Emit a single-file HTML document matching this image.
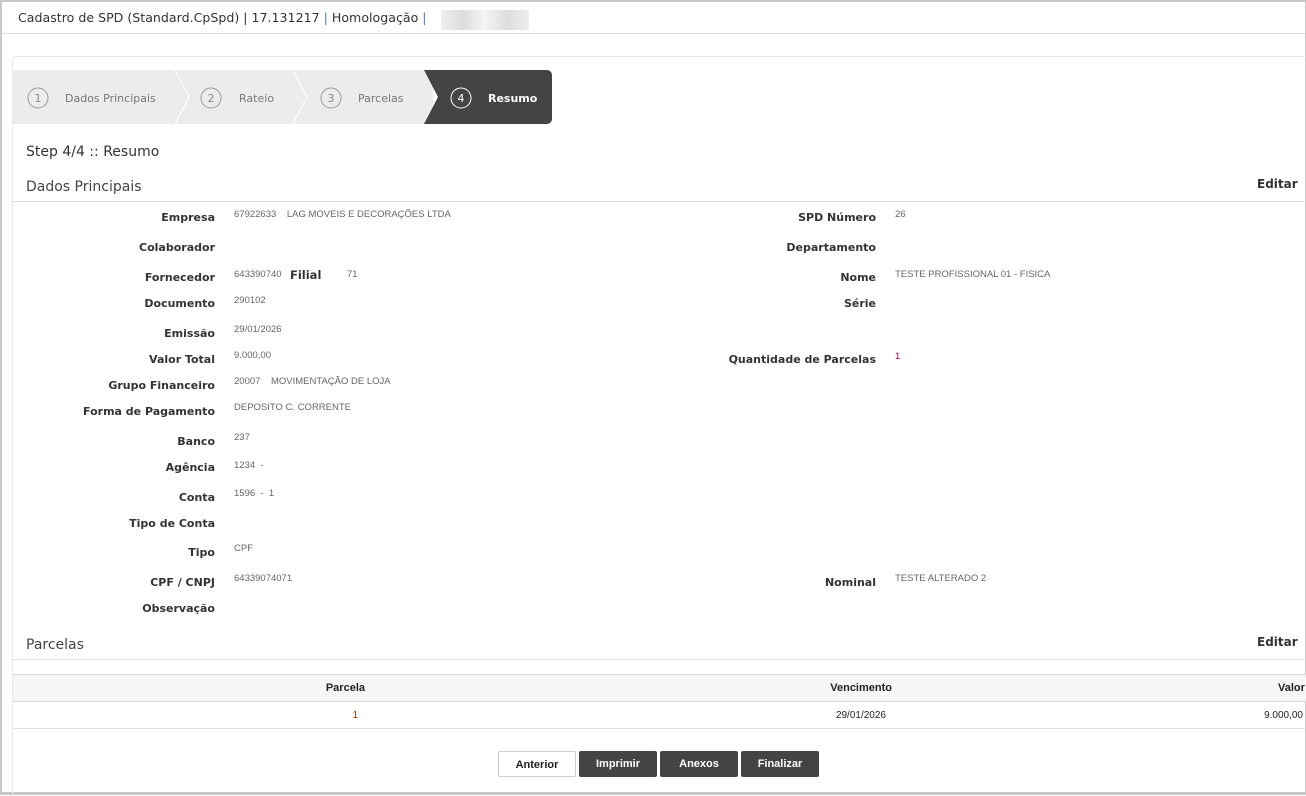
<!DOCTYPE html>
<html><head><meta charset="utf-8"><style>
*{margin:0;padding:0;box-sizing:border-box}
body{width:1306px;height:795px;background:#fff;position:relative;overflow:hidden;font-family:"DejaVu Sans","Liberation Sans",sans-serif}
.outer{position:absolute;left:0;top:0;width:1306px;height:795px;border:2px solid #c8c8c8;border-right:1px solid #c8c8c8;border-bottom:3px solid #c8c8c8}
.a{position:absolute;white-space:nowrap}
.lbl{position:absolute;font-weight:bold;font-size:11px;color:#333;text-align:right;white-space:nowrap}
.val{position:absolute;font-family:"Liberation Sans",sans-serif;font-size:9.5px;color:#666;white-space:nowrap}
.btn{position:absolute;top:751px;height:26px;border-radius:2px;font-family:"Liberation Sans",sans-serif;font-weight:bold;font-size:11px;text-align:center;line-height:26px;background:#444;color:#fff}
</style></head><body>
<div class="outer"></div>
<div class="a" style="left:18px;top:10px;font-size:12.6px;color:#333">Cadastro de SPD (Standard.CpSpd) | 17.131217 <span style="color:#4a7ab5">|</span> Homologação <span style="color:#4a7ab5">|</span></div>
<div class="a" style="left:441px;top:10px;width:88px;height:20px;background:linear-gradient(90deg,#eee,#ddd,#f4f4f4,#ddd,#eee)"></div>
<div class="a" style="left:2px;top:33px;width:1303px;height:1px;background:#ddd"></div>
<div class="a" style="left:12px;top:56px;width:1294px;height:740px;border:1px solid #e8e8e8;border-right:none;border-bottom:none;border-radius:4px 0 0 0"></div>
<!-- steps -->
<div class="a" style="left:13px;top:70px;width:420px;height:54px;background:#ececec"></div>
<svg class="a" style="left:13px;top:70px" width="540" height="54">
<polyline points="162,0 176,27 162,54" fill="none" stroke="#fff" stroke-width="1.2"/>
<polyline points="280,0 294,27 280,54" fill="none" stroke="#fff" stroke-width="1.2"/>
<path d="M411,0 H534 a5,5 0 0 1 5,5 V49 a5,5 0 0 1 -5,5 H411 L425,27 Z" fill="#444"/>
<circle cx="25" cy="28" r="10" fill="none" stroke="#999"/>
<circle cx="198" cy="28" r="10" fill="none" stroke="#999"/>
<circle cx="318" cy="28" r="10" fill="none" stroke="#999"/>
<circle cx="448" cy="28" r="10" fill="none" stroke="#fff"/>
<text x="25" y="32" font-size="11" fill="#888" text-anchor="middle" font-family="DejaVu Sans">1</text>
<text x="198" y="32" font-size="11" fill="#888" text-anchor="middle" font-family="DejaVu Sans">2</text>
<text x="318" y="32" font-size="11" fill="#888" text-anchor="middle" font-family="DejaVu Sans">3</text>
<text x="448" y="32" font-size="11" fill="#fff" text-anchor="middle" font-family="DejaVu Sans">4</text>
<text x="52" y="32" font-size="11" fill="#777" font-family="DejaVu Sans">Dados Principais</text>
<text x="226" y="32" font-size="11" fill="#777" font-family="DejaVu Sans">Rateio</text>
<text x="345" y="32" font-size="11" fill="#777" font-family="DejaVu Sans">Parcelas</text>
<text x="475" y="32" font-size="11" fill="#fff" font-weight="bold" font-family="DejaVu Sans">Resumo</text>
</svg>
<div class="a" style="left:26px;top:144px;font-size:14px;color:#333">Step 4/4 :: Resumo</div>
<div class="a" style="left:26px;top:179px;font-size:14px;color:#444">Dados Principais</div>
<div class="a" style="left:1257px;top:177px;font-size:12px;font-weight:bold;color:#333">Editar</div>
<div class="a" style="left:13px;top:201px;width:1293px;height:1px;background:#ddd"></div>

<div class="lbl" style="right:1091px;top:211px">Empresa</div><div class="val" style="left:234px;top:209px">67922633 &nbsp;&nbsp; LAG MOVEIS E DECORAÇÕES LTDA</div>
<div class="lbl" style="right:1091px;top:241px">Colaborador</div>
<div class="lbl" style="right:1091px;top:271px">Fornecedor</div><div class="val" style="left:234px;top:269px">643390740</div><div class="a" style="left:290px;top:268px;font-size:11.5px;font-weight:bold;color:#333">Filial</div><div class="val" style="left:347px;top:269px">71</div>
<div class="lbl" style="right:1091px;top:297px">Documento</div><div class="val" style="left:234px;top:295px">290102</div>
<div class="lbl" style="right:1091px;top:327px">Emissão</div><div class="val" style="left:234px;top:324px">29/01/2026</div>
<div class="lbl" style="right:1091px;top:353px">Valor Total</div><div class="val" style="left:234px;top:350px">9.000,00</div>
<div class="lbl" style="right:1091px;top:379px">Grupo Financeiro</div><div class="val" style="left:234px;top:376px">20007 &nbsp;&nbsp; MOVIMENTAÇÃO DE LOJA</div>
<div class="lbl" style="right:1091px;top:405px">Forma de Pagamento</div><div class="val" style="left:234px;top:402px">DEPOSITO C. CORRENTE</div>
<div class="lbl" style="right:1091px;top:435px">Banco</div><div class="val" style="left:234px;top:432px">237</div>
<div class="lbl" style="right:1091px;top:461px">Agência</div><div class="val" style="left:234px;top:460px">1234 &nbsp;-</div>
<div class="lbl" style="right:1091px;top:491px">Conta</div><div class="val" style="left:234px;top:488px">1596 &nbsp;- &nbsp;1</div>
<div class="lbl" style="right:1091px;top:517px">Tipo de Conta</div>
<div class="lbl" style="right:1091px;top:546px">Tipo</div><div class="val" style="left:234px;top:543px">CPF</div>
<div class="lbl" style="right:1091px;top:576px">CPF / CNPJ</div><div class="val" style="left:234px;top:573px">64339074071</div>
<div class="lbl" style="right:1091px;top:602px">Observação</div>

<div class="lbl" style="right:430px;top:211px">SPD Número</div><div class="val" style="left:895px;top:209px">26</div>
<div class="lbl" style="right:430px;top:241px">Departamento</div>
<div class="lbl" style="right:430px;top:271px">Nome</div><div class="val" style="left:895px;top:269px">TESTE PROFISSIONAL 01 - FISICA</div>
<div class="lbl" style="right:430px;top:297px">Série</div>
<div class="lbl" style="right:430px;top:353px">Quantidade de Parcelas</div><div class="val" style="left:895px;top:351px;color:#a04">1</div>
<div class="lbl" style="right:430px;top:576px">Nominal</div><div class="val" style="left:895px;top:573px">TESTE ALTERADO 2</div>

<div class="a" style="left:26px;top:637px;font-size:14px;color:#444">Parcelas</div>
<div class="a" style="left:1257px;top:635px;font-size:12px;font-weight:bold;color:#333">Editar</div>
<div class="a" style="left:13px;top:659px;width:1293px;height:1px;background:#ddd"></div>
<div class="a" style="left:13px;top:674px;width:1293px;height:28px;background:#f6f6f6;border-top:1px solid #ddd;border-bottom:1px solid #ddd"></div>
<div class="a" style="left:13px;top:728px;width:1293px;height:1px;background:#ddd"></div>
<div class="a" style="right:941px;top:682px;font-family:'Liberation Sans',sans-serif;font-weight:bold;font-size:11px;color:#222">Parcela</div>
<div class="a" style="right:414px;top:682px;font-family:'Liberation Sans',sans-serif;font-weight:bold;font-size:11px;color:#222">Vencimento</div>
<div class="a" style="left:1278px;top:682px;font-family:'Liberation Sans',sans-serif;font-weight:bold;font-size:11px;color:#222">Valor</div>
<div class="a" style="right:948px;top:710px;font-family:'Liberation Sans',sans-serif;font-size:10px;color:#a03000">1</div>
<div class="a" style="right:420px;top:710px;font-family:'Liberation Sans',sans-serif;font-size:10px;color:#222">29/01/2026</div>
<div class="a" style="right:3px;top:710px;font-family:'Liberation Sans',sans-serif;font-size:10px;color:#222">9.000,00</div>

<div class="btn" style="left:498px;width:78px;background:#fff;color:#222;border:1px solid #ccc">Anterior</div>
<div class="btn" style="left:579px;width:78px">Imprimir</div>
<div class="btn" style="left:660px;width:78px">Anexos</div>
<div class="btn" style="left:741px;width:78px">Finalizar</div>
</body></html>
